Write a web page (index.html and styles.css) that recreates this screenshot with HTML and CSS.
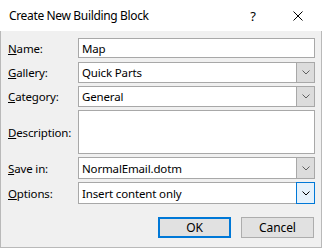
FILE: index.html
```html
<!DOCTYPE html>
<html lang="en">
<head>
  <meta charset="UTF-8" />
  <title>Create New Building Block</title>
  <link rel="stylesheet" href="styles.css">
</head>
<body>
  <div class="dialog">
    <!-- Title bar -->
    <div class="titlebar">
      <span class="title">Create New Building Block</span>
      <span class="help">?</span>
      <span class="close">
        <svg width="10" height="10" viewBox="0 0 10 10">
          <path d="M0.5 0.5 L9.5 9.5 M9.5 0.5 L0.5 9.5" stroke="#000" stroke-width="1" fill="none"/>
        </svg>
      </span>
    </div>

    <div class="content">
      <div class="form">
        <div class="row row-name">
          <label><u>N</u>ame:</label>
          <div class="field">Map</div>
        </div>
        <div class="row row-combo">
          <label><u>G</u>allery:</label>
          <div class="field combo">
            <span class="value">Quick Parts</span>
            <span class="drop">
              <svg width="8" height="5" viewBox="0 0 8 5"><path d="M0.5 0.5 L4 4 L7.5 0.5" stroke="#606060" fill="none"/></svg>
            </span>
          </div>
        </div>
        <div class="row row-combo">
          <label><u>C</u>ategory:</label>
          <div class="field combo">
            <span class="value">General</span>
            <span class="drop">
              <svg width="8" height="5" viewBox="0 0 8 5"><path d="M0.5 0.5 L4 4 L7.5 0.5" stroke="#606060" fill="none"/></svg>
            </span>
          </div>
        </div>
        <div class="row row-desc">
          <label><u>D</u>escription:</label>
          <div class="field"></div>
        </div>
        <div class="row row-combo2">
          <label><u>S</u>ave in:</label>
          <div class="field combo">
            <span class="value">NormalEmail.dotm</span>
            <span class="drop">
              <svg width="8" height="5" viewBox="0 0 8 5"><path d="M0.5 0.5 L4 4 L7.5 0.5" stroke="#606060" fill="none"/></svg>
            </span>
          </div>
        </div>
        <div class="row row-combo2">
          <label><u>O</u>ptions:</label>
          <div class="field combo">
            <span class="value">Insert content only</span>
            <span class="drop focus">
              <svg width="8" height="5" viewBox="0 0 8 5"><path d="M0.5 0.5 L4 4 L7.5 0.5" stroke="#000" fill="none"/></svg>
            </span>
          </div>
        </div>
      </div>

      <div class="buttons">
        <button class="default">OK</button>
        <button>Cancel</button>
      </div>
    </div>
  </div>
</body>
</html>
```

FILE: styles.css
```css
html, body {
  margin: 0;
  padding: 0;
}
body {
  width: 322px;
  height: 248px;
  font-family: 'Noto Sans', 'Open Sans', sans-serif;
  font-size: 11.5px;
  letter-spacing: -0.15px;
  color: #000;
  background: #f0f0f0;
}
.dialog {
  box-sizing: border-box;
  width: 322px;
  height: 248px;
  border: 1px solid #b9b9b9;
  border-top: none;
  background: #f0f0f0;
  display: flex;
  flex-direction: column;
}
.titlebar {
  height: 31px;
  background: #fff;
  display: flex;
  align-items: center;
  margin: 0 -1px;
}
.title {
  padding-left: 9px;
  flex: 1;
  font-size: 12px;
  letter-spacing: -0.35px;
}
.help {
  width: 12px;
  margin-right: 34px;
  font-size: 13px;
  text-align: center;
}
.close {
  display: flex;
  margin-right: 19px;
}
.content {
  padding: 7px 6px 0 6px;
  flex: 1;
}
.form {
  display: flex;
  flex-direction: column;
  gap: 3px;
}
.row {
  display: flex;
  align-items: center;
}
.row label {
  width: 71px;
  padding-left: 1px;
  box-sizing: border-box;
}
.field {
  flex: 1;
  height: 100%;
  box-sizing: border-box;
  background: #fff;
  border: 1px solid #a8a8a8;
  display: flex;
  align-items: center;
  padding-left: 3px;
}
.row-name { height: 20px; margin-bottom: 1px; }
.row-combo { height: 21px; }
.row-desc { height: 44px; }
.row-combo2 { height: 22px; }
.combo .value {
  flex: 1;
}
.drop {
  width: 18px;
  height: 100%;
  box-sizing: border-box;
  background: #dcdcdc;
  border-left: 1px solid #a8a8a8;
  display: flex;
  align-items: center;
  justify-content: center;
}
.drop.focus {
  background: #e5f1fb;
  border: 1px solid #0078d7;
  margin: -1px -1px -1px 0;
  height: calc(100% + 2px);
  width: 19px;
}
.buttons {
  display: flex;
  justify-content: flex-end;
  gap: 10px;
  margin-top: 13px;
  padding-right: 1px;
}
button {
  width: 73px;
  height: 21px;
  box-sizing: border-box;
  background: #e1e1e1;
  border: 1px solid #adadad;
  font-family: inherit;
  font-size: 12px;
  letter-spacing: -0.1px;
  color: #000;
  padding: 0;
}
button.default {
  border: 2px solid #0078d7;
}
```
